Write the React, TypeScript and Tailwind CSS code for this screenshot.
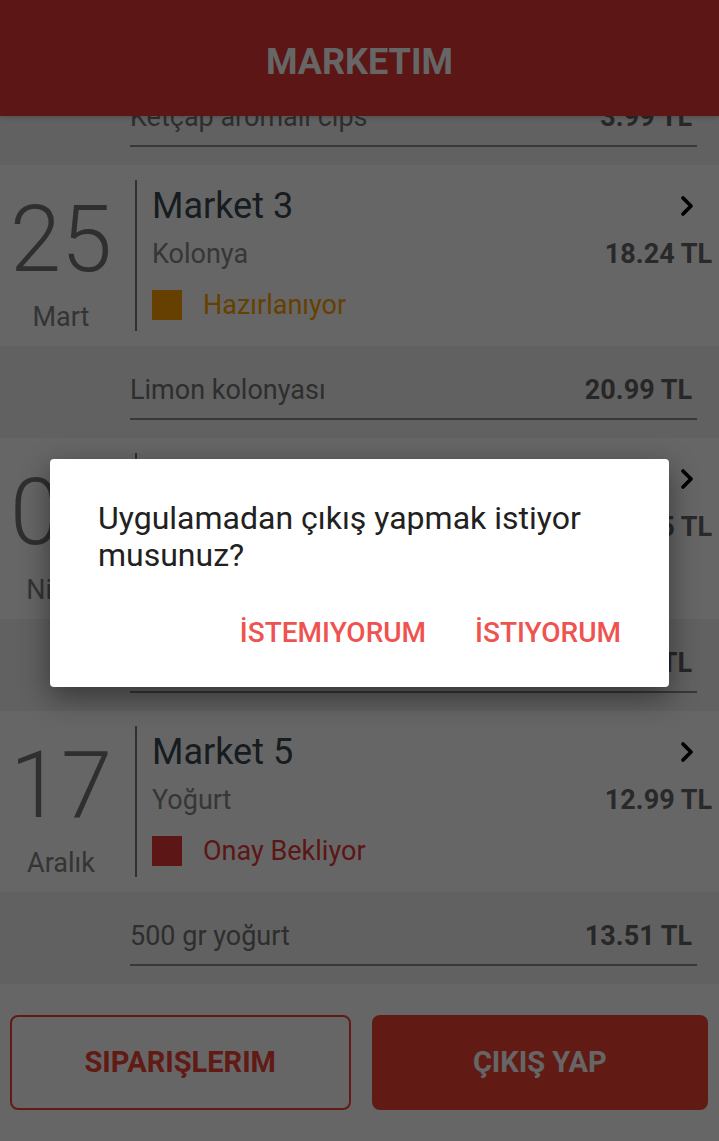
import { ChevronRight } from "lucide-react";

type Order = {
  day: string;
  month: string;
  market: string;
  product: string;
  price: string;
  status: string;
  statusColor: "amber" | "red" | "green";
  item: string;
  itemPrice: string;
};

const orders: Order[] = [
  {
    day: "25",
    month: "Mart",
    market: "Market 3",
    product: "Kolonya",
    price: "18.24 TL",
    status: "Hazırlanıyor",
    statusColor: "amber",
    item: "Limon kolonyası",
    itemPrice: "20.99 TL",
  },
  {
    day: "04",
    month: "Nisan",
    market: "Market 4",
    product: "Şampuan",
    price: "24.75 TL",
    status: "Teslim Edildi",
    statusColor: "green",
    item: "Bakım şampuanı",
    itemPrice: "19.90 TL",
  },
  {
    day: "17",
    month: "Aralık",
    market: "Market 5",
    product: "Yoğurt",
    price: "12.99 TL",
    status: "Onay Bekliyor",
    statusColor: "red",
    item: "500 gr yoğurt",
    itemPrice: "13.51 TL",
  },
];

const statusStyles = {
  amber: { box: "bg-[#ffa000]", text: "text-[#ffa000]" },
  red: { box: "bg-[#e53935]", text: "text-[#e53935]" },
  green: { box: "bg-[#43a047]", text: "text-[#43a047]" },
};

function ItemRow({ name, price }: { name: string; price: string }) {
  return (
    <div className="h-[92px] shrink-0 bg-[#f2f2f2] pt-[28px]">
      <div className="ml-[130px] mr-[22px] flex h-[46px] items-start justify-between border-b-2 border-[#8c8c8c] pr-[5px]">
        <span className="text-[27px] leading-[32px] text-[#737373]">{name}</span>
        <span className="text-[27px] font-bold leading-[32px] text-[#636363]">{price}</span>
      </div>
    </div>
  );
}

function OrderCard({ order }: { order: Order }) {
  const s = statusStyles[order.statusColor];
  return (
    <div className="flex h-[181px] shrink-0 bg-white py-[15px]">
      {/* date */}
      <div className="flex w-[122px] flex-col items-center">
        <span className="mt-[14px] text-[92px] font-light leading-[92px] text-[#777777]">
          {order.day}
        </span>
        <span className="mt-[16px] text-[27px] leading-[30px] text-[#838383]">{order.month}</span>
      </div>
      <div className="ml-[13px] w-[2px] bg-[#7a7a7a]" />

      {/* details */}
      <div className="flex flex-1 flex-col pl-[15px] pr-[7px]">
        <div className="mt-[6px] flex items-center justify-between">
          <span className="text-[36px] leading-[40px] text-[#37474f]">{order.market}</span>
          <ChevronRight className="mr-[9px] h-[32px] w-[32px] text-black" strokeWidth={2.8} />
        </div>
        <div className="mt-[12px] flex items-center justify-between">
          <span className="text-[27px] leading-[32px] text-[#888888]">{order.product}</span>
          <span className="text-[27px] font-bold leading-[32px] text-[#676767]">{order.price}</span>
        </div>
        <div className="mt-[19px] flex items-center gap-[21px]">
          <span className={`h-[30px] w-[30px] ${s.box}`} />
          <span className={`text-[27px] leading-[32px] ${s.text}`}>{order.status}</span>
        </div>
      </div>
    </div>
  );
}

export default function App() {
  return (
    <div className="relative flex h-[1141px] w-[719px] flex-col overflow-hidden bg-white font-['Roboto',sans-serif]">
      {/* Header */}
      <header className="relative z-10 flex h-[116px] shrink-0 items-center justify-center bg-[#e53935] pt-[8px] shadow-[0_2px_4px_rgba(0,0,0,0.15)]">
        <h1 className="text-[36px] font-bold leading-[40px] text-white">MARKETIM</h1>
      </header>

      {/* Order list (scrolled) */}
      <main className="flex-1 overflow-hidden">
        <div className="-mt-[43px] flex flex-col">
          <ItemRow name="Ketçap aromalı cips" price="3.99 TL" />
          {orders.map((o) => (
            <div key={o.market} className="flex flex-col">
              <OrderCard order={o} />
              <ItemRow name={o.item} price={o.itemPrice} />
            </div>
          ))}
        </div>
      </main>

      {/* Bottom actions */}
      <footer className="flex h-[157px] shrink-0 gap-[21px] bg-white pb-[31px] pl-[10px] pr-[11px] pt-[31px]">
        <button className="flex flex-1 items-center justify-center rounded-[8px] border-2 border-[#f44336] text-[29px] font-bold text-[#f44336]">
          SIPARIŞLERIM
        </button>
        <button className="flex flex-1 items-center justify-center rounded-[8px] bg-[#f44336] text-[29px] font-bold text-white">
          ÇIKIŞ YAP
        </button>
      </footer>

      {/* Dim overlay + dialog */}
      <div className="absolute inset-0 z-20 flex items-center justify-center bg-black/60">
        <div className="mt-[4px] w-[619px] rounded-[4px] bg-white pb-[36px] pl-[48px] pr-[48px] pt-[41px] shadow-[0_10px_30px_rgba(0,0,0,0.45)]">
          <p className="text-[32px] leading-[37px] text-[#212121]">
            Uygulamadan çıkış yapmak istiyor musunuz?
          </p>
          <div className="mt-[40px] flex justify-end gap-[49px]">
            <button className="text-[28px] font-medium leading-[37px] text-[#ef5350]">İSTEMIYORUM</button>
            <button className="text-[28px] font-medium leading-[37px] text-[#ef5350]">İSTIYORUM</button>
          </div>
        </div>
      </div>
    </div>
  );
}
